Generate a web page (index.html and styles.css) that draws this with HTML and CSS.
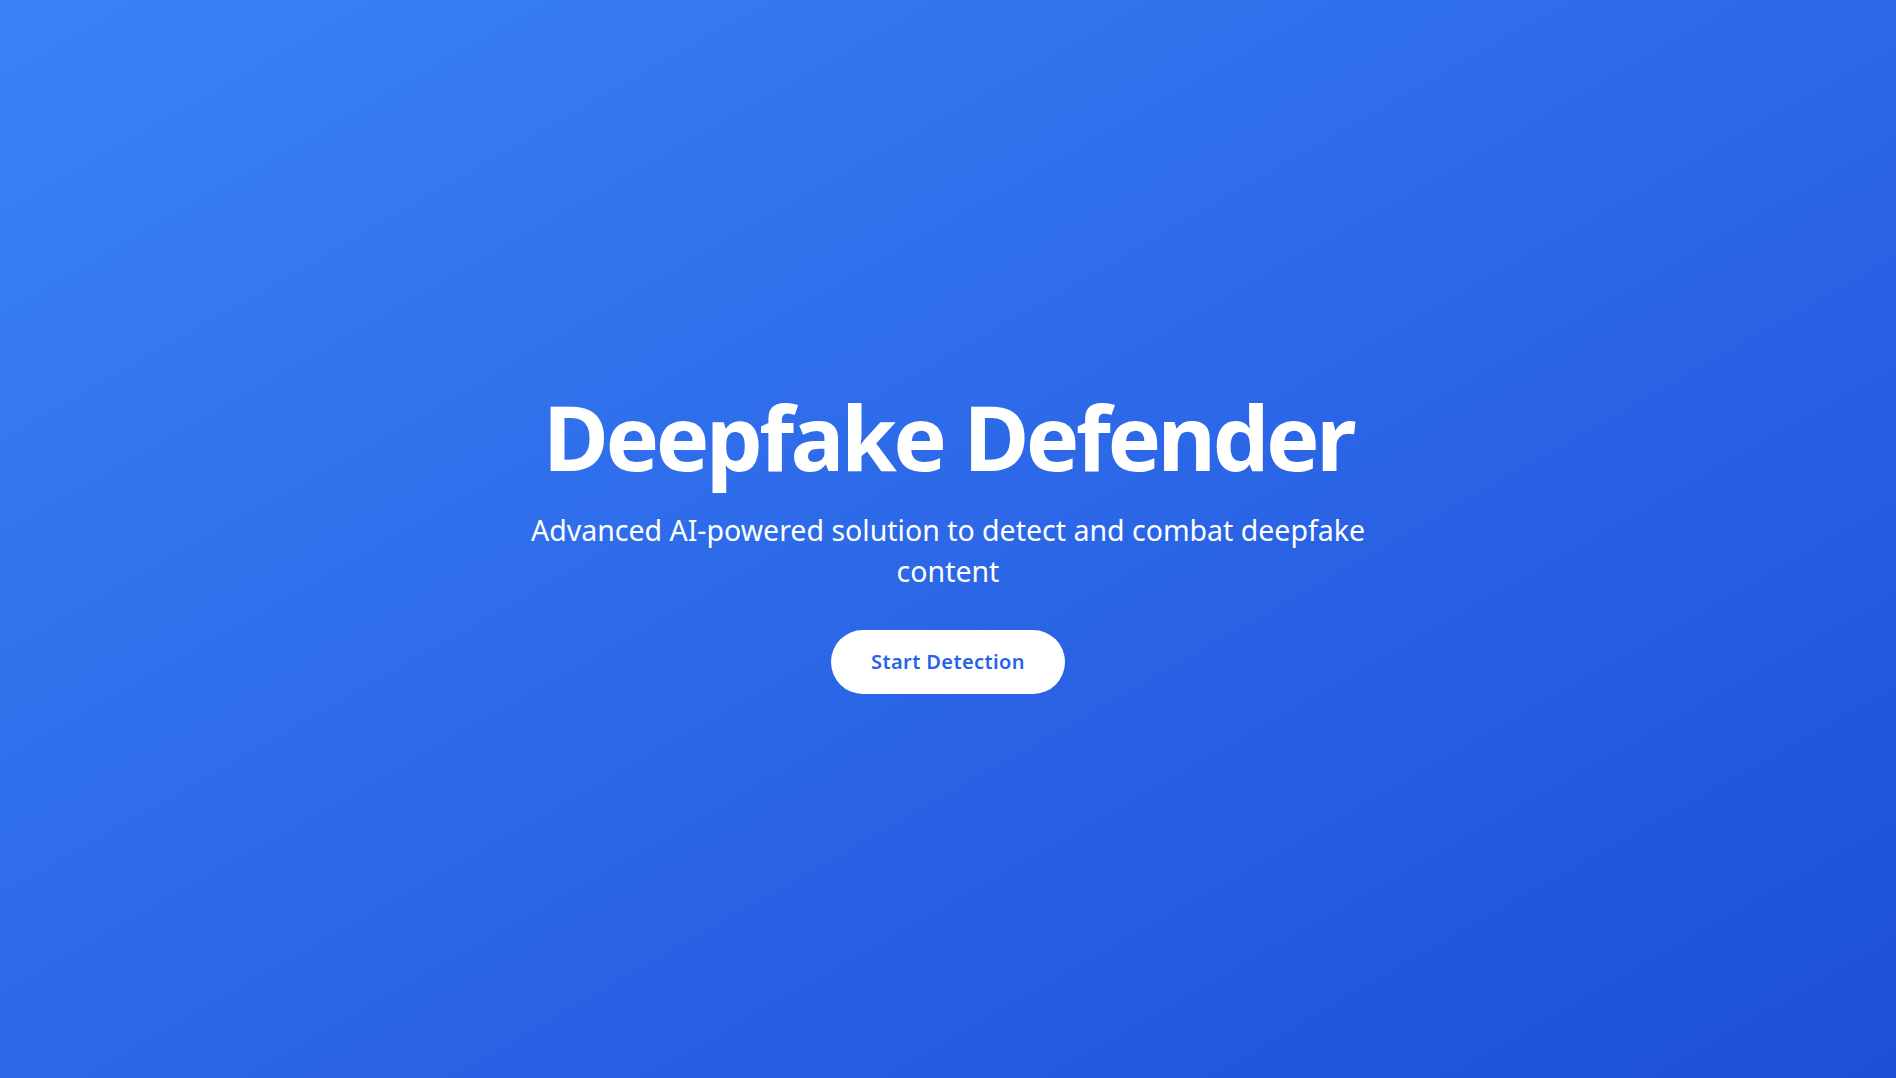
FILE: index.html
```html
<!DOCTYPE html>
<html lang="en">
<head>
<meta charset="utf-8">
<title>Deepfake Defender</title>
<link rel="stylesheet" href="styles.css">
</head>
<body>
<main class="hero">
  <div class="hero-inner">
    <h1 class="title">Deepfake Defender</h1>
    <p class="subtitle">Advanced AI-powered solution to detect and combat deepfake content</p>
    <button class="cta" type="button">Start Detection</button>
  </div>
</main>
</body>
</html>
```

FILE: styles.css
```css
* { box-sizing: border-box; }
html, body { margin: 0; padding: 0; }
body {
  font-family: "Noto Sans", "Open Sans", "DejaVu Sans", sans-serif;
  color: #fff;
}
.hero {
  min-height: 100vh;
  display: flex;
  align-items: center;
  justify-content: center;
  background: linear-gradient(to bottom right, #3b82f6, #1d4ed8);
}
.hero-inner {
  display: flex;
  flex-direction: column;
  align-items: center;
  text-align: center;
  max-width: 896px;
  padding: 6px 16px 0;
}
.title {
  margin: 0;
  font-size: 90px;
  font-weight: 700;
  line-height: 1;
  letter-spacing: -3.5px;
  white-space: nowrap;
}
.subtitle {
  margin: 29px 0 38px;
  font-size: 28.5px;
  line-height: 41px;
  font-weight: 400;
}
.cta {
  font-family: inherit;
  background: #fff;
  color: #2563eb;
  border: none;
  border-radius: 9999px;
  padding: 18px 40px;
  font-size: 20px;
  line-height: 28px;
  font-weight: 600;
  letter-spacing: 0.4px;
  cursor: pointer;
}
```
